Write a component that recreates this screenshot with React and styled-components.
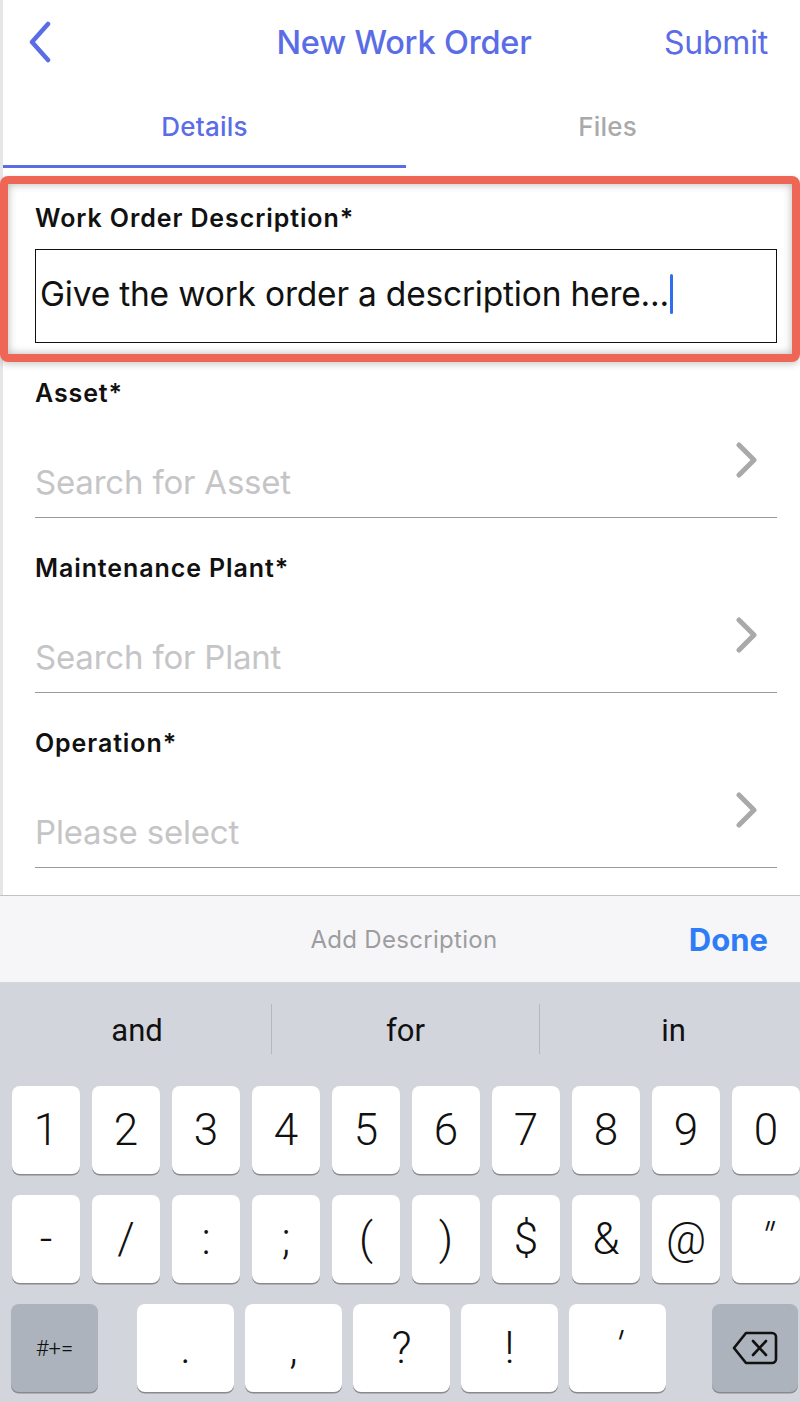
import styled, { createGlobalStyle } from 'styled-components';

const GlobalStyle = createGlobalStyle`
  html, body {
    margin: 0;
    padding: 0;
    background: #fff;
  }
  body {
    font-family: Inter, Roboto, "Liberation Sans", sans-serif;
    -webkit-font-smoothing: antialiased;
  }
`;

const Screen = styled.div`
  width: 800px;
  height: 1402px;
  overflow: hidden;
  display: flex;
  flex-direction: column;
  background: linear-gradient(to right, #e6e6e8 0, #e6e6e8 3px, #fff 3px);
`;

const Header = styled.div`
  height: 84px;
  display: grid;
  grid-template-columns: 1fr auto 1fr;
  align-items: center;
  padding: 0 32px 0 26px;
  color: #5a6de6;
`;

const BackButton = styled.div`
  display: flex;
  align-items: center;
`;

const Title = styled.div`
  font-size: 32.5px;
  font-weight: 500;
  padding-left: 14px;
  letter-spacing: -0.2px;
`;

const Submit = styled.div`
  justify-self: end;
  font-size: 32px;
  letter-spacing: -0.2px;
`;

const Tabs = styled.div`
  width: 809px;
  height: 84px;
  display: flex;
  padding-left: 3px;
  box-sizing: border-box;
`;

const Tab = styled.div`
  flex: 1;
  display: flex;
  align-items: center;
  justify-content: center;
  font-size: 26px;
  font-weight: 500;
  letter-spacing: 0.2px;
  color: ${(p) => (p.$active ? '#5a6de6' : '#a9a9ab')};
  border-bottom: 3px solid ${(p) => (p.$active ? '#5a6de6' : 'transparent')};
  box-sizing: border-box;
  padding-top: 4px;
`;

const Highlight = styled.div`
  margin-top: 8px;
  height: 186px;
  box-sizing: border-box;
  border: 8px solid #ee6655;
  border-radius: 8px;
  background: #fff;
  box-shadow: inset 0 0 8px rgba(0, 0, 0, 0.3), 0 3px 6px rgba(0, 0, 0, 0.18);
  padding: 19px 15px 0 27px;
`;

const Label = styled.div`
  font-size: 25px;
  font-weight: 600;
  letter-spacing: 0.9px;
  color: #111;
  line-height: 30px;
`;

const TextBox = styled.div`
  margin-top: 16px;
  height: 94px;
  box-sizing: border-box;
  border: 1.5px solid #111;
  display: flex;
  align-items: center;
  padding: 0 4px 4px;
  font-size: 33.5px;
  letter-spacing: -0.2px;
  color: #111;
`;

const Cursor = styled.span`
  display: inline-block;
  width: 3px;
  height: 40px;
  background: #2f6ef0;
  border-radius: 2px;
  margin-left: 1px;
`;

const Field = styled.div`
  margin: ${(p) => (p.$first ? '16px' : '35px')} 23px 0 35px;
  border-bottom: 1.5px solid #9a9a9c;
`;

const FieldRow = styled.div`
  height: 109px;
  display: flex;
  align-items: flex-end;
  justify-content: space-between;
  padding-bottom: 16px;
  box-sizing: border-box;
`;

const Placeholder = styled.div`
  font-size: 33px;
  line-height: 38px;
  color: #c5c5c7;
  letter-spacing: -0.2px;
`;

const Chevron = styled.div`
  margin: 0 18px 23px 0;
  display: flex;
`;

const Spacer = styled.div`
  flex: 1;
`;

const Toolbar = styled.div`
  height: 86px;
  border-top: 1.5px solid #c2c2c4;
  background: #f6f6f8;
  display: grid;
  grid-template-columns: 1fr auto 1fr;
  align-items: center;
  padding: 0 32px 0 32px;
`;

const ToolbarTitle = styled.div`
  font-size: 24px;
  letter-spacing: 0.3px;
  color: #9d9da0;
  padding-left: 8px;
`;

const Done = styled.div`
  justify-self: end;
  font-size: 31px;
  font-weight: 700;
  color: #2f7df6;
`;

const Keyboard = styled.div`
  height: 420px;
  background: #d2d5db;
  display: flex;
  flex-direction: column;
  font-family: Roboto, "Liberation Sans", sans-serif;
`;

const Suggestions = styled.div`
  height: 94px;
  display: grid;
  grid-template-columns: repeat(3, 268px);
  padding-left: 3px;
  align-items: center;
`;

const Suggestion = styled.div`
  height: 48px;
  display: flex;
  align-items: center;
  justify-content: center;
  font-size: 31px;
  color: #111;
  border-left: ${(p) => (p.$divider ? '1.5px solid #b6b8bd' : 'none')};
  padding-top: 2px;
`;

const KeyRows = styled.div`
  display: flex;
  flex-direction: column;
  gap: 21px;
  padding-top: 10px;
`;

const KeyRow = styled.div`
  display: flex;
  gap: ${(p) => p.$gap}px;
  padding-left: ${(p) => p.$left}px;
`;

const Key = styled.div`
  width: ${(p) => p.$w}px;
  height: 88px;
  flex-shrink: 0;
  border-radius: 8px;
  background: ${(p) => (p.$special ? '#adb3bc' : '#fff')};
  box-shadow: 0 1.5px 0 #898a8e;
  display: flex;
  align-items: center;
  justify-content: center;
  font-size: ${(p) => p.$size || 44}px;
  font-weight: 300;
  color: #111;
  margin-left: ${(p) => p.$ml || 0}px;
`;

const Quote = styled.span`
  display: inline-block;
  transform: skewX(-15deg);
`;

const ChevronRight = () => (
  <svg width="24" height="36" viewBox="0 0 24 36">
    <path d="M4 3 L19 18 L4 33" fill="none" stroke="#a9a9ab" strokeWidth="5" strokeLinecap="round" strokeLinejoin="round" />
  </svg>
);

const BackIcon = () => (
  <svg width="28" height="42" viewBox="0 0 28 42">
    <path d="M22 3 L6 21 L22 39" fill="none" stroke="#5a6de6" strokeWidth="4.5" strokeLinecap="round" strokeLinejoin="round" />
  </svg>
);

const DeleteIcon = () => (
  <svg width="46" height="34" viewBox="0 0 46 34">
    <path d="M14 2 H40 a4 4 0 0 1 4 4 V28 a4 4 0 0 1 -4 4 H14 L2 17 Z" fill="none" stroke="#111" strokeWidth="2.6" strokeLinejoin="round" />
    <path d="M21 10 L34 24 M34 10 L21 24" stroke="#111" strokeWidth="2.6" strokeLinecap="round" />
  </svg>
);

const fields = [
  { label: 'Asset*', placeholder: 'Search for Asset' },
  { label: 'Maintenance Plant*', placeholder: 'Search for Plant' },
  { label: 'Operation*', placeholder: 'Please select' },
];

const digits = ['1', '2', '3', '4', '5', '6', '7', '8', '9', '0'];
const symbols = ['-', '/', ':', ';', '(', ')', '$', '&', '@'];
const punctuation = ['.', ',', '?', '!'];

export default function App() {
  return (
    <Screen>
      <GlobalStyle />
      <Header>
        <BackButton>
          <BackIcon />
        </BackButton>
        <Title>New Work Order</Title>
        <Submit>Submit</Submit>
      </Header>
      <Tabs>
        <Tab $active>Details</Tab>
        <Tab>Files</Tab>
      </Tabs>

      <Highlight>
        <Label>Work Order Description*</Label>
        <TextBox>
          Give the work order a description here...
          <Cursor />
        </TextBox>
      </Highlight>

      {fields.map((f, i) => (
        <Field key={f.label} $first={i === 0}>
          <Label>{f.label}</Label>
          <FieldRow>
            <Placeholder>{f.placeholder}</Placeholder>
            <Chevron>
              <ChevronRight />
            </Chevron>
          </FieldRow>
        </Field>
      ))}

      <Spacer />

      <Toolbar>
        <div />
        <ToolbarTitle>Add Description</ToolbarTitle>
        <Done>Done</Done>
      </Toolbar>

      <Keyboard>
        <Suggestions>
          <Suggestion>and</Suggestion>
          <Suggestion $divider>for</Suggestion>
          <Suggestion $divider>in</Suggestion>
        </Suggestions>
        <KeyRows>
          <KeyRow $gap={12} $left={12}>
            {digits.map((d) => (
              <Key key={d} $w={68}>{d}</Key>
            ))}
          </KeyRow>
          <KeyRow $gap={12} $left={12}>
            {symbols.map((s) => (
              <Key key={s} $w={68}>{s}</Key>
            ))}
            <Key $w={68}>
              <Quote>"</Quote>
            </Key>
          </KeyRow>
          <KeyRow $gap={11} $left={11}>
            <Key $w={87} $special $size={22}>#+=</Key>
            {punctuation.map((p, i) => (
              <Key key={p} $w={97} $ml={i === 0 ? 28 : 0}>{p}</Key>
            ))}
            <Key $w={97}>
              <Quote>'</Quote>
            </Key>
            <Key $w={86} $special $ml={35}>
              <DeleteIcon />
            </Key>
          </KeyRow>
        </KeyRows>
      </Keyboard>
    </Screen>
  );
}
